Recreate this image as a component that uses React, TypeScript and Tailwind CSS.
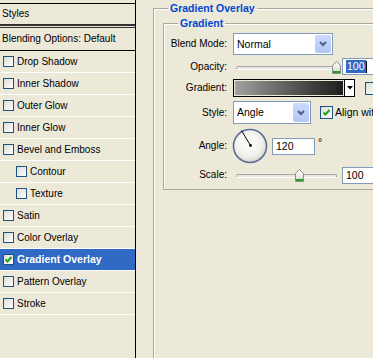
import clsx from "clsx";

const effects = [
  { label: "Drop Shadow" },
  { label: "Inner Shadow" },
  { label: "Outer Glow" },
  { label: "Inner Glow" },
  { label: "Bevel and Emboss" },
  { label: "Contour", sub: true },
  { label: "Texture", sub: true },
  { label: "Satin" },
  { label: "Color Overlay" },
  { label: "Gradient Overlay", checked: true, active: true },
  { label: "Pattern Overlay" },
  { label: "Stroke" },
];

function Check({ checked, size = "md" }: { checked?: boolean; size?: "sm" | "md" }) {
  return (
    <span
      className={clsx(
        "shrink-0 flex items-center justify-center border border-[#1C5180] bg-gradient-to-br from-[#DCDCD7] to-white",
        size === "sm" ? "w-[11px] h-[11px]" : "w-[13px] h-[13px]"
      )}
    >
      {checked && (
        <svg width="9" height="9" viewBox="0 0 9 9">
          <path d="M1.5 4.5 L3.5 6.5 L7.5 2" fill="none" stroke="#21A121" strokeWidth="2" />
        </svg>
      )}
    </span>
  );
}

function Select({ value, width }: { value: string; width: string }) {
  return (
    <div className={clsx("h-full flex items-center justify-between border border-[#7F9DB9] bg-white pl-[3px] pr-px", width)}>
      <span className="text-[10.5px]">{value}</span>
      <span className="w-[16px] h-[calc(100%-2px)] rounded-[2px] bg-gradient-to-b from-[#CDDAFC] to-[#B3C6F5] flex items-center justify-center">
        <svg width="8" height="6" viewBox="0 0 8 6">
          <path d="M1 1 L4 4 L7 1" fill="none" stroke="#4D6185" strokeWidth="2" />
        </svg>
      </span>
    </div>
  );
}

function Slider({ pos }: { pos: number }) {
  return (
    <div className="relative w-[105px] h-full ml-[3px] shrink-0">
      <div className="absolute left-0 right-[4px] top-1/2 -mt-[1px] h-[4px] rounded-full border border-[#A5A5A5] border-b-white bg-[#E9E8E0]" />
      <svg className="absolute top-1/2 -mt-[6px]" style={{ left: pos }} width="9" height="13" viewBox="0 0 9 13">
        <defs>
          <linearGradient id={`th${pos}`} x1="0" y1="0" x2="0" y2="1">
            <stop offset="0" stopColor="#ffffff" />
            <stop offset="1" stopColor="#D8D8D0" />
          </linearGradient>
        </defs>
        <path d="M0.5 4.5 L4.5 0.5 L8.5 4.5 L8.5 12.5 L0.5 12.5 Z" fill={`url(#th${pos})`} stroke="#8C8C84" />
        <rect x="1" y="10" width="7" height="2" fill="#21A121" />
      </svg>
    </div>
  );
}

function Field({ children, width }: { children: React.ReactNode; width: string }) {
  return (
    <div className={clsx("h-[17px] flex items-center border border-[#7F9DB9] bg-white pl-[3px] shrink-0", width)}>
      {children}
    </div>
  );
}

function Row({ label, height, mt, children }: { label: string; height: string; mt: string; children: React.ReactNode }) {
  return (
    <div className={clsx("flex items-center", height, mt)}>
      <span className="w-[64px] shrink-0 text-right text-[10px] pr-px">{label}</span>
      <div className="ml-[5px] flex items-center h-full">{children}</div>
    </div>
  );
}

export default function App() {
  return (
    <div className="w-[373px] h-[358px] overflow-hidden bg-[#ECE9D8] flex text-black font-['Liberation_Sans',Arial,sans-serif] text-[10px] leading-none">
      {/* effects list */}
      <div className="w-[136px] shrink-0 border-r border-black pt-[3px] flex flex-col">
        <div className="h-[21px] border-t border-black flex items-center pl-[2px]">Styles</div>
        <div className="h-[4px] border-t-2 border-b border-[#333]" />
        <div className="h-[23px] border-b border-black flex items-center pl-[2px]">Blending Options: Default</div>
        {effects.map((e) => (
          <div
            key={e.label}
            className={clsx(
              "h-[22px] flex items-center gap-[3px] border-b border-white",
              e.sub ? "pl-[16px]" : "pl-[3px]",
              e.active && "bg-[#316AC5] text-white font-bold text-[10.5px]"
            )}
          >
            <Check checked={e.checked} size="sm" />
            <span>{e.label}</span>
          </div>
        ))}
      </div>

      {/* settings */}
      <div className="flex-1 min-w-0 pl-[17px] pt-[8px]">
        <div className="relative w-[260px] h-[400px] border border-[#ACA899] shadow-[inset_1px_1px_0_#fff] pl-[9px] pt-[14px]">
          <span className="absolute -top-[7px] left-[14px] px-[2px] bg-[#ECE9D8] text-[#0046D5] font-bold text-[10.5px] leading-[12px]">
            Gradient Overlay
          </span>
          <div className="relative h-[167px] border border-[#ACA899] shadow-[inset_1px_1px_0_#fff] pt-[9px]">
            <span className="absolute -top-[7px] left-[14px] px-[2px] bg-[#ECE9D8] text-[#0046D5] font-bold text-[10.5px] leading-[12px]">
              Gradient
            </span>

            <Row label="Blend Mode:" height="h-[22px]" mt="mt-0">
              <Select value="Normal" width="w-[100px]" />
            </Row>

            <Row label="Opacity:" height="h-[17px]" mt="mt-[3px]">
              <Slider pos={96} />
              <Field width="w-[40px] ml-[1px]">
                <span className="bg-[#316AC5] text-white text-[10.5px] px-px leading-[13px]">100</span>
                <span className="w-px h-[12px] bg-black" />
              </Field>
            </Row>

            <Row label="Gradient:" height="h-[18px]" mt="mt-[4px]">
              <div className="h-full flex border border-black bg-white w-[122px]">
                <div className="flex-1 border border-[#ECE9D8] bg-gradient-to-r from-[#A2A2A2] to-[#1E1E1E]" />
                <div className="w-[10px] flex items-center justify-center border-l border-black">
                  <svg width="6" height="4" viewBox="0 0 6 4">
                    <path d="M0 0 H6 L3 3.5 Z" fill="#000" />
                  </svg>
                </div>
              </div>
              <span className="ml-[10px]">
                <Check />
              </span>
            </Row>

            <Row label="Style:" height="h-[23px]" mt="mt-[4px]">
              <Select value="Angle" width="w-[78px]" />
              <span className="ml-[9px]">
                <Check checked />
              </span>
              <span className="ml-[2px] text-[10.5px] whitespace-nowrap">Align with Layer</span>
            </Row>

            <Row label="Angle:" height="h-[36px]" mt="mt-[4px]">
              <svg width="36" height="36" viewBox="0 0 36 36" className="shrink-0 -ml-px">
                <defs>
                  <radialGradient id="dial" cx="0.45" cy="0.4" r="0.6">
                    <stop offset="0" stopColor="#FFFFFF" />
                    <stop offset="0.7" stopColor="#F1F0EA" />
                    <stop offset="1" stopColor="#D6D5CC" />
                  </radialGradient>
                </defs>
                <circle cx="18" cy="18" r="16.5" fill="url(#dial)" stroke="#5B6E98" strokeWidth="1.6" />
                <line x1="18.5" y1="17.5" x2="9.5" y2="2.5" stroke="#000" strokeWidth="1" />
                <circle cx="18.5" cy="17.5" r="1.4" fill="#000" />
              </svg>
              <span className="ml-[4px]">
                <Field width="w-[43px]">
                  <span className="text-[10.5px]">120</span>
                </Field>
              </span>
              <span className="ml-[3px] self-start mt-[9px] text-[10.5px]">°</span>
            </Row>

            <Row label="Scale:" height="h-[16px]" mt="mt-[3px]">
              <Slider pos={59} />
              <Field width="w-[40px] ml-[1px]">
                <span className="text-[10.5px]">100</span>
              </Field>
            </Row>
          </div>
        </div>
      </div>
    </div>
  );
}
